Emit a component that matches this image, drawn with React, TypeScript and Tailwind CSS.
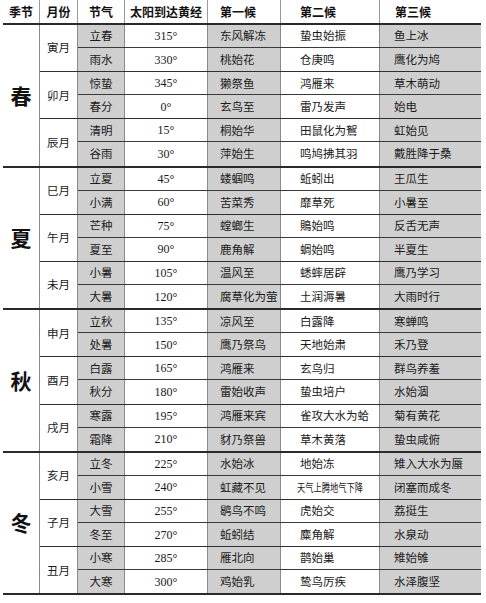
import React from "react";

type Row = [string, string, string, string, string];
type Month = { name: string; rows: Row[] };
type Season = { name: string; months: Month[] };

const data: Season[] = [
  {
    name: "春",
    months: [
      { name: "寅月", rows: [["立春", "315°", "东风解冻", "蛰虫始振", "鱼上冰"], ["雨水", "330°", "桃始花", "仓庚鸣", "鹰化为鸠"]] },
      { name: "卯月", rows: [["惊蛰", "345°", "獭祭鱼", "鸿雁来", "草木萌动"], ["春分", "0°", "玄鸟至", "雷乃发声", "始电"]] },
      { name: "辰月", rows: [["清明", "15°", "桐始华", "田鼠化为鴽", "虹始见"], ["谷雨", "30°", "萍始生", "鸣鸠拂其羽", "戴胜降于桑"]] },
    ],
  },
  {
    name: "夏",
    months: [
      { name: "巳月", rows: [["立夏", "45°", "蝼蝈鸣", "蚯蚓出", "王瓜生"], ["小满", "60°", "苦菜秀", "靡草死", "小暑至"]] },
      { name: "午月", rows: [["芒种", "75°", "螳螂生", "鵙始鸣", "反舌无声"], ["夏至", "90°", "鹿角解", "蜩始鸣", "半夏生"]] },
      { name: "未月", rows: [["小暑", "105°", "温风至", "蟋蟀居辟", "鹰乃学习"], ["大暑", "120°", "腐草化为萤", "土润溽暑", "大雨时行"]] },
    ],
  },
  {
    name: "秋",
    months: [
      { name: "申月", rows: [["立秋", "135°", "凉风至", "白露降", "寒蝉鸣"], ["处暑", "150°", "鹰乃祭鸟", "天地始肃", "禾乃登"]] },
      { name: "酉月", rows: [["白露", "165°", "鸿雁来", "玄鸟归", "群鸟养羞"], ["秋分", "180°", "雷始收声", "蛰虫培户", "水始涸"]] },
      { name: "戌月", rows: [["寒露", "195°", "鸿雁来宾", "雀攻大水为蛤", "菊有黄花"], ["霜降", "210°", "豺乃祭兽", "草木黄落", "蛰虫咸俯"]] },
    ],
  },
  {
    name: "冬",
    months: [
      { name: "亥月", rows: [["立冬", "225°", "水始冰", "地始冻", "雉入大水为蜃"], ["小雪", "240°", "虹藏不见", "天气上腾地气下降", "闭塞而成冬"]] },
      { name: "子月", rows: [["大雪", "255°", "鹖鸟不鸣", "虎始交", "荔挺生"], ["冬至", "270°", "蚯蚓结", "麋角解", "水泉动"]] },
      { name: "丑月", rows: [["小寒", "285°", "雁北向", "鹊始巢", "雉始雊"], ["大寒", "300°", "鸡始乳", "鸷鸟厉疾", "水泽腹坚"]] },
    ],
  },
];

const cjk = { fontFamily: '"Noto Sans CJK SC", "Noto Sans", sans-serif' };
const serif = { fontFamily: '"Liberation Serif", "Noto Sans CJK SC", serif' };

function DataRow({ r, last }: { r: Row; last: boolean }) {
  const long = r[3].length > 7;
  return (
    <div className={`flex h-[23.1px] items-stretch ${last ? "" : "border-b border-[#3a3a3a]"}`}>
      <div className="w-[47px] flex items-center justify-center bg-[#cfcfcf] border-r border-[#8a8a8a] text-[11.5px] text-[#1a1a1a]" style={cjk}>
        {r[0]}
      </div>
      <div className="w-[83px] flex items-center justify-center border-r border-[#8a8a8a] text-[12px] text-[#1a1a1a]" style={serif}>
        {r[1]}
      </div>
      <div className="w-[73px] flex items-center pl-[12px] bg-[#cfcfcf] border-r border-[#8a8a8a] text-[11.5px] text-[#1a1a1a] whitespace-nowrap overflow-hidden" style={cjk}>
        {r[2]}
      </div>
      <div className="w-[99px] flex items-center pl-[16px] border-r border-[#8a8a8a] text-[#1a1a1a] whitespace-nowrap overflow-hidden" style={cjk}>
        {long ? (
          <span className="inline-block text-[11px] scale-x-[0.75] origin-left">{r[3]}</span>
        ) : (
          <span className="text-[11.5px] pl-[3px]">{r[3]}</span>
        )}
      </div>
      <div className="w-[101px] flex items-center pl-[14px] bg-[#cfcfcf] text-[11.5px] text-[#1a1a1a] whitespace-nowrap" style={cjk}>
        {r[4]}
      </div>
    </div>
  );
}

export default function App() {
  return (
    <div className="w-[486px] h-[603px] bg-white overflow-hidden">
      <div className="ml-[3px] w-[478px]">
        <div className="flex h-[25px] border-b-2 border-[#2a2a2a] text-[12px] font-bold text-[#111]" style={cjk}>
          <div className="w-[37px] flex items-center justify-center border-r border-[#9a9a9a]">季节</div>
          <div className="w-[38px] flex items-center justify-center border-r border-[#9a9a9a]">月份</div>
          <div className="w-[47px] flex items-center justify-center border-r border-[#9a9a9a]">节气</div>
          <div className="w-[83px] flex items-center justify-center border-r border-[#9a9a9a]">太阳到达黄经</div>
          <div className="w-[73px] flex items-center pl-[12px] border-r border-[#9a9a9a]">第一候</div>
          <div className="w-[99px] flex items-center pl-[19px] border-r border-[#9a9a9a]">第二候</div>
          <div className="w-[101px] flex items-center pl-[15px]">第三候</div>
        </div>
        {data.map((s) => (
          <div key={s.name} className="flex border-b-2 border-[#2a2a2a]">
            <div className="w-[37px] flex items-center justify-center border-r border-[#8a8a8a] text-[21px] font-bold text-[#111]" style={cjk}>
              {s.name}
            </div>
            <div className="flex flex-col">
              {s.months.map((m, mi) => (
                <div key={m.name} className={`flex ${mi < s.months.length - 1 ? "border-b border-[#2f2f2f]" : ""}`}>
                  <div className="w-[38px] flex items-center justify-center border-r border-[#8a8a8a] text-[11.5px] text-[#1a1a1a]" style={cjk}>
                    {m.name}
                  </div>
                  <div className="flex flex-col">
                    {m.rows.map((r, ri) => (
                      <DataRow key={r[0]} r={r} last={ri === m.rows.length - 1} />
                    ))}
                  </div>
                </div>
              ))}
            </div>
          </div>
        ))}
      </div>
    </div>
  );
}
